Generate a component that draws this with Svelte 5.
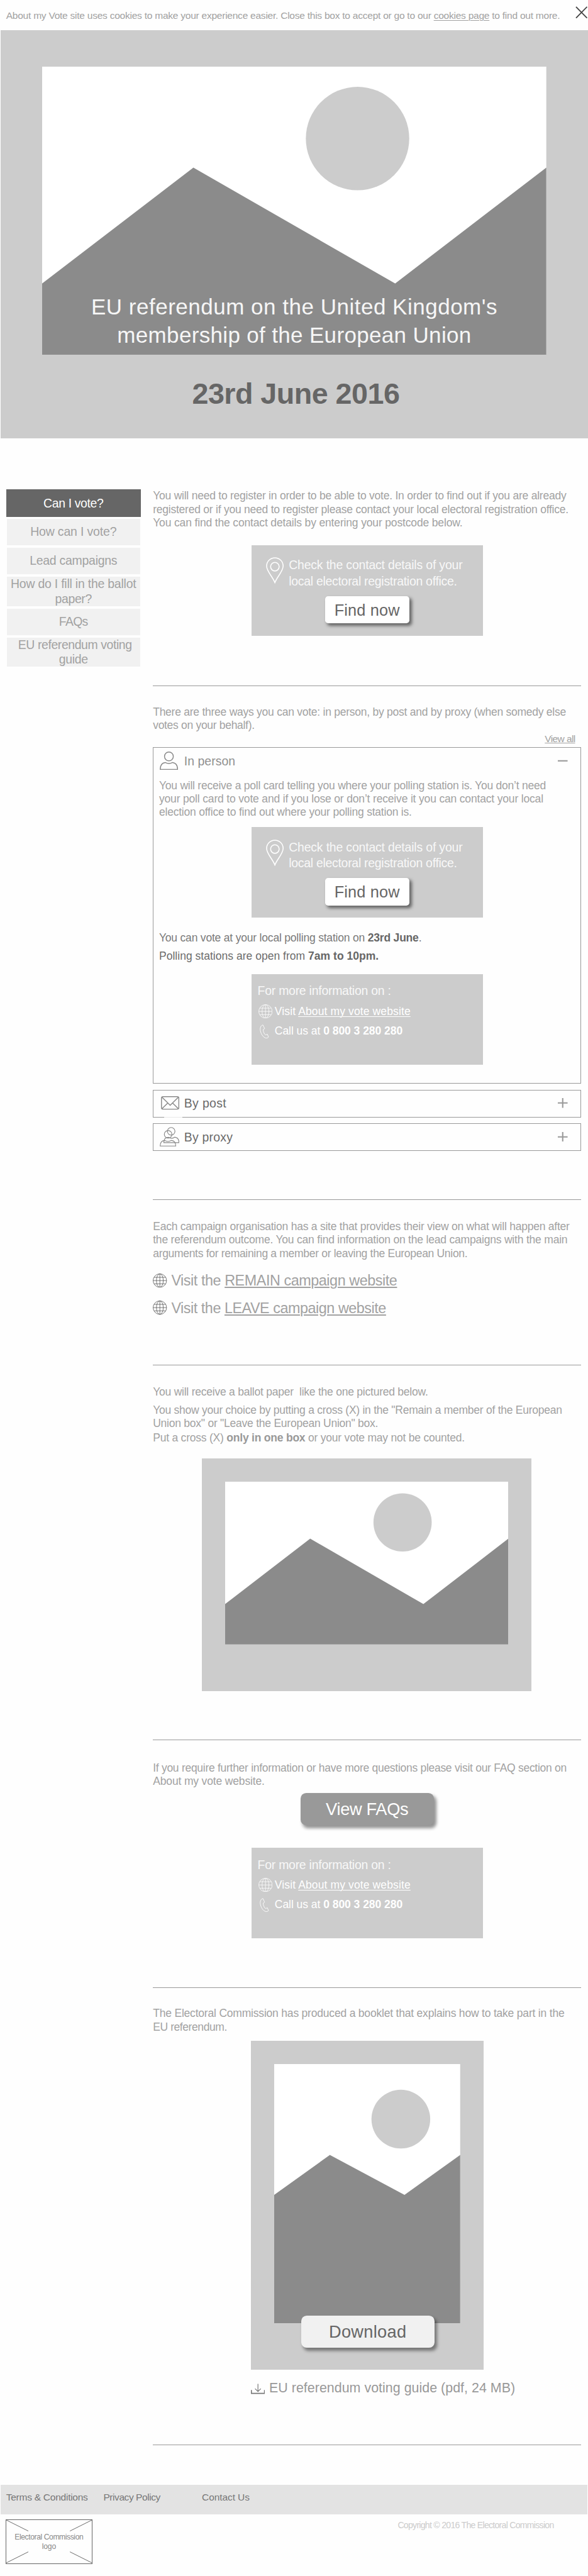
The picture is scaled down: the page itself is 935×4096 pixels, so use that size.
<script>
  const fit = (node, width) => {
    const page = node.closest('.page');
    const scale = page.getBoundingClientRect().width / 961;
    let spacing = 0;
    for (let i = 0; i < 3; i++) {
      const actual = node.getBoundingClientRect().width / scale;
      spacing += (width - actual) / node.textContent.length;
      node.style.letterSpacing = spacing.toFixed(3) + 'px';
    }
  };

  const menu = [
    { lines: [['Can I vote?', 98]], kind: 'active' },
    { lines: [['How can I vote?', 141]], kind: 'single' },
    { lines: [['Lead campaigns', 143]], kind: 'single' },
    { lines: [['How do I fill in the ballot', 205], ['paper?', 60]], kind: 'double' },
    { lines: [['FAQs', 47]], kind: 'single' },
    { lines: [[' EU referendum voting', 191], ['guide', 47]], kind: 'double' }
  ];
</script>

{#snippet lines(rows)}
  {#each rows as [text, width]}
    <span class="ln" use:fit={width}>{text}</span>
  {/each}
{/snippet}

{#snippet globe(kind)}
  <svg class="globe {kind}" viewBox="0 0 23 23" aria-hidden="true">
    <circle cx="11.5" cy="11.5" r="11" />
    <ellipse cx="11.5" cy="11.5" rx="5.6" ry="11" />
    <path d="M11.5 .5v22M.5 11.5h22M2 6.2h19M2 16.8h19" />
  </svg>
{/snippet}

{#snippet finder()}
  <div class="card finder">
    <div class="finder-top">
      <svg class="pin" viewBox="0 0 29 43" aria-hidden="true">
        <path d="M14.5 41.5C11 32 1 23 1 14.3a13.5 13.3 0 0 1 27 0C28 23 18 32 14.5 41.5z" />
        <circle cx="14.5" cy="15.5" r="7" />
      </svg>
      <p class="lead">
        {@render lines([['Check the contact details of your', 284], ['local electoral registration office.', 275]])}
      </p>
    </div>
    <button class="find"><span class="ln" use:fit={107}>Find now</span></button>
  </div>
{/snippet}

{#snippet info()}
  <div class="card info">
    <p class="lead">{@render lines([['For more information on :', 218]])}</p>
    <p class="row">
      {@render globe('white')}
      <span class="ln" use:fit={222}>Visit <a href="#vote">About my vote website</a></span>
    </p>
    <p class="row">
      <svg class="phone" viewBox="0 0 15 23" aria-hidden="true">
        <path d="M5.2.7C2.5 1.4.8 4 .8 7.5c0 6.5 4.5 13.6 9.3 14.7 1.8.2 3.5-.5 4.2-1.7l-1.8-4.6-2.9 1.300c-2.500-2-4-5.500-3.900-8.900l2.300-1.500z" />
      </svg>
      <span class="ln" use:fit={209}>Call us at <b>0 800 3 280 280</b></span>
    </p>
  </div>
{/snippet}

<div class="page">
  <div class="cookies">
    <span class="ln" use:fit={905}>About my Vote site uses cookies to make your experience easier. Close this box to accept or go to our <a href="#cookies">cookies page</a> to find out more.</span>
    <svg class="close" viewBox="0 0 20 20" aria-label="Close"><path d="M1 .8l18 18.400M19 .8L1 19.200" /></svg>
  </div>

  <header class="hero">
    <div class="picture">
      <svg viewBox="0 0 824 471" aria-hidden="true">
        <rect width="824" height="471" fill="#fff" />
        <circle cx="515.500" cy="117.500" r="84.500" fill="#ccc" />
        <path d="M0 354.400L247.200 165 577 354.400 824 165V471H0z" fill="#8b8b8b" />
      </svg>
      <h1>
        {@render lines([["EU referendum on the United Kingdom's", 664], ['membership of the European Union', 579]])}
      </h1>
    </div>
    <p class="date"><span class="ln" use:fit={339}>23rd June 2016</span></p>
  </header>

  <div class="columns">
    <nav>
      {#each menu as item}
        <a class="item {item.kind}" href="#menu">{@render lines(item.lines)}</a>
      {/each}
    </nav>

    <main>
      <section class="register">
        <p>{@render lines([
          ['You will need to register in order to be able to vote. In order to find out if you are already', 675.500],
          ['registered or if you need to register please contact your local electoral registration office.', 679],
          ['You can find the contact details by entering your postcode below.', 506]
        ])}</p>
        {@render finder()}
      </section>

      <section class="ways">
        <p>{@render lines([
          ['There are three ways you can vote: in person, by post and by proxy (when somedy else', 675],
          ['votes on your behalf).', 166]
        ])}</p>
        <div class="all"><a class="ln" href="#all" use:fit={49.500}>View all</a></div>

        <article class="panel open">
          <div class="bar">
            <svg class="person" viewBox="0 0 30 30" aria-hidden="true">
              <circle cx="15" cy="8" r="7.200" />
              <path d="M9 17.900C3.500 18.500.8 22.500.8 29.200h28.400c0-6.700-2.700-10.700-8.200-11.300-3.800 2.200-8.200 2.200-12 0z" />
            </svg>
            <span class="ln" use:fit={83.500}>In person</span>
            <svg class="sign" viewBox="0 0 15 15" aria-hidden="true"><path d="M0 7.500h15" /></svg>
          </div>
          <p>{@render lines([
            ['You will receive a poll card telling you where your polling station is. You don’t need', 632],
            ['your poll card to vote and if you lose or don’t receive it you can contact your local', 628],
            ['election office to find out where your polling station is.', 413]
          ])}</p>
          {@render finder()}
          <p class="dark day"><span class="ln" use:fit={429}>You can vote at your local polling station on <b>23rd June</b>.</span></p>
          <p class="hours"><span class="ln" use:fit={359}>Polling stations are open from <b>7am to 10pm.</b></span></p>
          {@render info()}
        </article>

        <article class="panel post">
          <div class="bar">
            <svg class="envelope" viewBox="0 0 30 22" aria-hidden="true">
              <rect x=".8" y=".8" width="28.400" height="20.400" rx="2.500" />
              <path d="M1.500 1.500L15 15 28.500 1.500M1.500 20.500l10-9.700M28.500 20.500l-10-9.700" />
            </svg>
            <span class="ln" use:fit={69}>By post</span>
            <svg class="sign" viewBox="0 0 15 15" aria-hidden="true"><path d="M0 7.500h15M7.500 0v15" /></svg>
          </div>
        </article>

        <article class="panel proxy">
          <div class="bar">
            <svg class="people" viewBox="0 0 32 32" aria-hidden="true">
              <circle cx="18.700" cy="7" r="6.200" />
              <circle cx="13.700" cy="12" r="6.200" />
              <path d="M14 16.700C9.500 17 6.600 20 6.600 25.600h24.800c0-5.500-2.400-8.600-7-9-3.300 2.200-7.500 2.200-10.400.1z" />
              <path d="M8 21.900C3.200 22.300.7 25.500.7 31.100h25.500c0-5.500-2.500-8.800-7.200-9.200-3.500 2.200-7.500 2.200-11 0z" />
            </svg>
            <span class="ln" use:fit={79.500}>By proxy</span>
            <svg class="sign" viewBox="0 0 15 15" aria-hidden="true"><path d="M0 7.500h15M7.500 0v15" /></svg>
          </div>
        </article>
      </section>

      <section class="campaigns">
        <p>{@render lines([
          ['Each campaign organisation has a site that provides their view on what will happen after', 681],
          ['the referendum outcome. You can find information on the lead campaigns with the main', 677.500],
          ['arguments for remaining a member or leaving the European Union.', 514]
        ])}</p>
        <p class="visit">{@render globe('black')}<span class="ln" use:fit={369}>Visit the <a href="#remain">REMAIN campaign website</a></span></p>
        <p class="visit">{@render globe('black')}<span class="ln" use:fit={351}>Visit the <a href="#leave">LEAVE campaign website</a></span></p>
      </section>

      <section class="ballot">
        <p>{@render lines([['You will receive a ballot paper  like the one pictured below.', 449.500]])}</p>
        <p class="choice">{@render lines([
          ['You show your choice by putting a cross (X) in the "Remain a member of the European', 668.500],
          ['Union box" or "Leave the European Union" box.', 368]
        ])}</p>
        <p class="only"><span class="ln" use:fit={509.500}>Put a cross (X) <b>only in one box</b> or your vote may not be counted.</span></p>
        <div class="frame paper">
          <svg viewBox="0 0 463 266" aria-hidden="true">
            <rect width="463" height="266" fill="#fff" />
            <circle cx="290" cy="66.500" r="47.600" fill="#ccc" />
            <path d="M0 200L139 93 324 200 463 93V266H0z" fill="#8b8b8b" />
          </svg>
        </div>
      </section>

      <section class="faq">
        <p>{@render lines([
          ['If you require further information or have more questions please visit our FAQ section on', 676],
          ['About my vote website.', 182.500]
        ])}</p>
        <button class="big"><span class="ln" use:fit={135}>View FAQs</span></button>
        {@render info()}
      </section>

      <section class="booklet">
        <p>{@render lines([
          ['The Electoral Commission has produced a booklet that explains how to take part in the', 672.500],
          ['EU referendum.', 121]
        ])}</p>
        <div class="frame guide">
          <svg viewBox="0 0 304 424" aria-hidden="true">
            <rect width="304" height="424" fill="#fff" />
            <circle cx="207" cy="90" r="48" fill="#ccc" />
            <path d="M0 213.800L91 148.500 213 213.800 304 148.500V424H0z" fill="#8b8b8b" />
          </svg>
          <button class="big light"><span class="ln" use:fit={127}>Download</span></button>
        </div>
        <p class="file">
          <svg class="download" viewBox="0 0 23 17" aria-hidden="true">
            <path class="tray" d="M.7 10.500v5.500h21.600v-5.500" />
            <path d="M11.500.5v12M6.800 8.300l4.700 4.700 4.700-4.700" />
          </svg>
          <span class="ln" use:fit={402}>EU referendum voting guide (pdf, 24 MB)</span>
        </p>
      </section>
    </main>
  </div>

  <div class="links">
    <a class="ln" href="#terms" use:fit={133.500}>Terms &amp; Conditions</a>
    <a class="ln" href="#privacy" use:fit={93}>Privacy Policy</a>
    <a class="ln" href="#contact" use:fit={78}>Contact Us</a>
  </div>
  <footer>
    <div class="logo">
      <svg viewBox="0 0 140 70" aria-hidden="true"><path d="M0 0l36 18M140 0l-36 18M0 70l36-18M140 70l-36-18" /></svg>
      <p>{@render lines([['Electoral Commission', 112], ['logo', 23]])}</p>
    </div>
    <span class="ln copy" use:fit={255}>Copyright © 2016 The Electoral Commission</span>
  </footer>
</div>

<style>
  :global(body) { background: #fff; overflow: hidden; }
  .page {
    zoom: 0.97294;
    width: 961px;
    height: 4210px;
    overflow: hidden;
    background: #fefefe;
    font: 18px/22px "Liberation Sans", Arial, sans-serif;
    color: #a2a2a2;
  }
  .page :is(p, h1) { margin: 0; font-weight: normal; }
  a { color: inherit; text-decoration: none; }
  b { font-weight: bold; color: #999; }
  svg { display: block; fill: none; flex: none; }
  .ln { display: block; width: max-content; white-space: pre; }
  button { font: inherit; border: 0; padding: 0; display: flex; justify-content: center; }

  .cookies { height: 49px; padding: 10px 0 0 10px; display: flex; justify-content: space-between; font-size: 16px; line-height: 20px; }
  .cookies .ln { margin-top: 5px; }
  .cookies a { text-decoration: underline; text-decoration-thickness: 1px; text-underline-offset: 2px; }
  .cookies, .page { box-sizing: border-box; }
  .close { width: 20px; height: 20px; margin-right: 1px; stroke: #444; stroke-width: 1.9; }

  .hero { height: 667px; margin-left: 1px; padding: 60px 0 0 68px; box-sizing: border-box; background: #ccc; }
  .picture { display: grid; width: 824px; }
  .picture > * { grid-area: 1 / 1; }
  .picture svg { width: 824px; height: 471px; }
  h1 { align-self: end; display: flex; flex-direction: column; align-items: center; font-size: 36px; line-height: 46px; color: #f6f6f6; }
  .page h1 { padding-bottom: 9px; }
  .date { display: flex; justify-content: center; width: 829px; font-size: 48px; line-height: 56px; color: #666; }
  .page .date { margin-top: 36px; font-weight: bold; }

  .columns { display: flex; gap: 20px; padding: 84px 0 0 10px; }
  nav { width: 220px; display: flex; flex-direction: column; align-self: flex-start; font-size: 20px; line-height: 24px; }
  .item { display: flex; flex: none; flex-direction: column; justify-content: center; align-items: center; width: 218px; margin: 0 0 4px 1px; height: 43px; background: #f1f1f1; box-sizing: border-box; }
  .active { width: 220px; height: 45px; margin: 0 0 3px; background: #666; color: #fff; }
  .double { height: 48px; }
  .item:nth-child(3) { margin-bottom: 5px; }

  main { width: 700px; }
  section { border-bottom: 1px solid #999; box-sizing: border-box; }
  .register { height: 321px; }
  .card { width: 378px; height: 148px; margin: 25px auto 0; background: #ccc; color: #fff; box-sizing: border-box; }
  .card b { color: #fff; }
  .lead { font-size: 20px; line-height: 26px; color: #f8f8f8; }
  .finder { padding-top: 20px; }
  .finder-top { display: flex; gap: 8px; height: 63px; padding-left: 24px; }
  .pin { width: 29px; height: 43px; stroke: #fff; stroke-width: 1.6; }
  .find { width: 138px; height: 45px; margin: 0 auto; border-radius: 5px; background: #fff; color: #666; font-size: 26px; line-height: 46px; box-shadow: 4px 4px 5px rgba(0, 0, 0, .5); }

  .ways { height: 840px; padding-top: 32px; }
  .all { display: flex; justify-content: flex-end; padding-right: 10px; font-size: 16px; line-height: 20px; }
  .all a { text-decoration: underline; text-decoration-thickness: 1px; text-underline-offset: 1px; }
  .panel { border: 1px solid #999; box-sizing: border-box; }
  .open { height: 550px; margin-top: 4px; }
  .open > p { padding-left: 9px; }
  .open .card { margin-top: 13px; }
  .open .info { margin-top: 18px; }
  .bar { display: flex; padding: 0 21px 0 10px; font-size: 20px; line-height: 24px; }
  .open .bar { color: #909090; }
  .bar .ln { margin-top: 10px; }
  .bar svg { stroke: #888; stroke-width: 1.5; }
  .bar .sign { width: 16px; height: 16px; margin: 13px 0 0 auto; stroke: #999; stroke-width: 2; }
  .open .bar { height: 51px; }
  .person { width: 30px; height: 30px; margin: 6px 10px 0 0; }
  .dark { color: #7a7a7a; }
  .hours { color: #6c6c6c; }
  .dark b, .hours b { color: #666; }
  .page .day { margin-top: 22px; }
  .page .hours { margin-top: 8px; }
  .post, .proxy { height: 45px; margin-top: 10px; color: #6a6a6a; }
  .post .bar .ln { margin-top: 9px; }
  .post { position: relative; }
  .post::after { content: ""; position: absolute; left: 17px; bottom: -1px; width: 30px; height: 1px; background: #e8e8e8; }
  .envelope { width: 30px; height: 22px; margin: 10px 8px 0 2px; }
  .people { width: 32px; height: 32px; margin: 5px 8px 0 0; }
  .bar .people { stroke-width: 1.2; }

  .info { padding: 15px 0 0 11px; }
  .page .info .lead { margin-left: -1px; }
  .row { display: flex; height: 23px; line-height: 24px; }
  .page .info .row { margin-top: 9px; }
  .page .info .lead + .row { margin-top: 8px; }
  .row a { text-decoration: underline; text-decoration-thickness: 1px; text-underline-offset: 2px; }
  .globe { width: 23px; height: 23px; stroke-width: .8; }
  .white { stroke: #fff; margin-right: 4px; }
  .black { stroke: #555; }
  .phone { width: 15px; height: 23px; margin: 1px 9px 0 3px; stroke: #fff; stroke-width: .9; }

  .campaigns { height: 270px; padding-top: 33px; }
  .visit { display: flex; font-size: 24px; line-height: 30px; gap: 7px; }
  .page .visit { margin-top: 15px; }
  .page .campaigns p:first-child + .visit { margin-top: 18px; }
  .visit svg { margin-top: 3px; }
  .visit a { text-decoration: underline; text-decoration-thickness: 2px; text-underline-offset: 2px; }

  .ballot { height: 613px; padding-top: 33px; }
  .page .choice { margin-top: 8px; }
  .page .only { margin-top: 1px; }
  .frame { background: #ccc; box-sizing: border-box; }
  .paper { width: 539px; height: 380px; margin: 23px 0 0 80px; padding: 38px; }
  .paper svg { width: 463px; height: 266px; }

  .faq { height: 405px; padding-top: 35px; }
  .big { width: 218px; height: 53px; margin: 7px auto 0; border-radius: 9px; background: #999; color: #fff; font-size: 28px; line-height: 53px; box-shadow: 4px 5px 5px rgba(0, 0, 0, .42); }
  .faq .card { margin-top: 37px; }

  .booklet { height: 747px; padding-top: 31px; }
  .guide { width: 380px; height: 538px; margin: 11px auto 0; padding: 38px; }
  .guide svg { width: 304px; height: 424px; }
  .light { position: relative; top: -20px; margin: 7px 0 0 44px; background: #f1f1f1; color: #666; }
  .file { display: flex; font-size: 22px; line-height: 26px; color: #999; }
  .page .file { margin: 17px 0 0 160px; }
  .download { width: 23px; height: 17px; margin: 6px 7px 0 0; stroke: #777; stroke-width: 1.2; }
  .tray { stroke-width: 1.8; }

  .links { display: flex; height: 48px; margin: 65px 1px 0; padding: 10px 0 0 9px; box-sizing: border-box; background: #e3e3e3; color: #777; font-size: 16px; line-height: 20px; }
  .links a:nth-child(1) { margin-right: 25.5px; }
  .links a:nth-child(2) { margin-right: 68px; }
  footer { display: flex; padding: 10px 56px 0 10px; justify-content: space-between; }
  .logo { display: grid; width: 140px; height: 70px; box-sizing: border-box; outline: 1px solid #666; outline-offset: -1px; font-size: 12.5px; line-height: 15px; color: #888; }
  .logo > * { grid-area: 1 / 1; }
  .logo svg { width: 140px; height: 70px; stroke: #666; }
  .logo p { display: flex; flex-direction: column; align-items: center; padding-top: 20px; }
  .copy { margin-top: -2px; font-size: 14.5px; line-height: 20px; color: #ccc; }
</style>
